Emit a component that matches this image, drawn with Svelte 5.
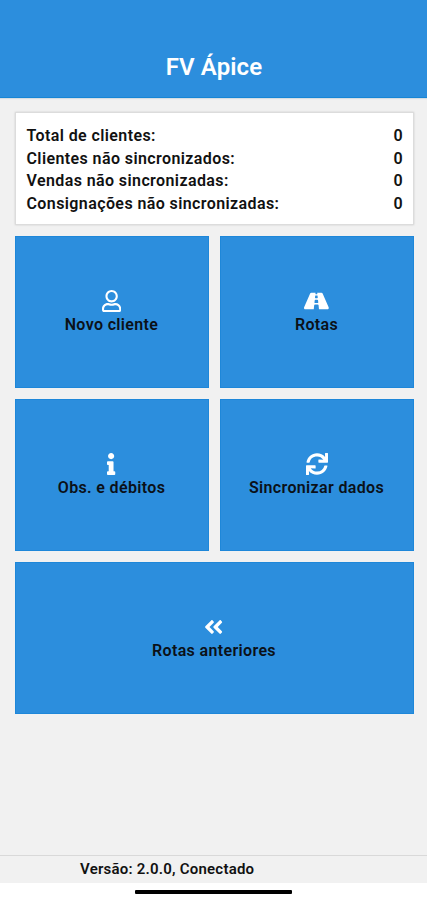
<script>
  const totals = [
    { label: 'Total de clientes:', value: 0 },
    { label: 'Clientes não sincronizados:', value: 0 },
    { label: 'Vendas não sincronizadas:', value: 0 },
    { label: 'Consignações não sincronizadas:', value: 0 },
  ];

  const actions = [
    {
      label: 'Novo cliente',
      box: '0 0 448 512',
      path: 'M313.6 304c-28.7 0-42.5 16-89.6 16-47.1 0-60.8-16-89.6-16C60.2 304 0 364.2 0 438.4V464c0 26.5 21.5 48 48 48h352c26.5 0 48-21.5 48-48v-25.6c0-74.2-60.2-134.4-134.4-134.4zM400 464H48v-25.6c0-47.6 38.8-86.4 86.4-86.4 14.6 0 38.3 16 89.6 16 51.7 0 74.9-16 89.6-16 47.6 0 86.4 38.8 86.4 86.4V464zM224 288c79.5 0 144-64.5 144-144S303.5 0 224 0 80 64.5 80 144s64.5 144 144 144zm0-240c52.9 0 96 43.1 96 96s-43.1 96-96 96-96-43.1-96-96 43.1-96 96-96z',
    },
    {
      label: 'Rotas',
      box: '0 0 576 512',
      path: 'M573.19 402.67l-139.79-320C428.43 71.29 417.6 64 405.68 64h-97.59l2.45 23.16c.5 4.72-3.21 8.84-7.96 8.84h-29.16c-4.75 0-8.46-4.12-7.96-8.84L267.91 64h-97.59c-11.93 0-22.76 7.29-27.73 18.67L2.8 402.67C-6.45 423.86 8.31 448 30.54 448h196.84l10.31-97.68c.86-8.14 7.72-14.32 15.91-14.32h68.8c8.19 0 15.05 6.18 15.91 14.32L348.62 448h196.84c22.23 0 36.99-24.14 27.73-45.33zM260.4 135.16a8 8 0 0 1 7.96-7.16h39.29c4.09 0 7.53 3.09 7.96 7.16l4.6 43.58c.75 7.09-4.81 13.26-11.93 13.26h-40.54c-7.13 0-12.68-6.17-11.93-13.26l4.59-43.58zM315.64 304h-55.29c-9.5 0-16.91-8.23-15.91-17.68l5.07-48c.86-8.14 7.72-14.32 15.91-14.32h45.15c8.19 0 15.05 6.18 15.91 14.32l5.07 48c1 9.45-6.41 17.68-15.91 17.68z',
    },
    {
      label: 'Obs. e débitos',
      box: '0 0 192 512',
      path: 'M20 424.229h20V279.771H20c-11.046 0-20-8.954-20-20V212c0-11.046 8.954-20 20-20h112c11.046 0 20 8.954 20 20v212.229h20c11.046 0 20 8.954 20 20V492c0 11.046-8.954 20-20 20H20c-11.046 0-20-8.954-20-20v-47.771c0-11.046 8.954-20 20-20zM96 0C56.235 0 24 32.235 24 72s32.235 72 72 72 72-32.235 72-72S135.764 0 96 0z',
    },
    {
      label: 'Sincronizar dados',
      box: '0 0 512 512',
      path: 'M440.65 12.57l4 82.77A247.16 247.16 0 0 0 255.83 8C134.73 8 33.91 94.92 12.29 209.82A12 12 0 0 0 24.09 224h49.05a12 12 0 0 0 11.67-9.26 175.91 175.91 0 0 1 317-56.94l-101.46-4.86a12 12 0 0 0-12.57 12v47.41a12 12 0 0 0 12 12H500a12 12 0 0 0 12-12V12a12 12 0 0 0-12-12h-47.37a12 12 0 0 0-11.98 12.57zM255.83 432a175.61 175.61 0 0 1-146-77.8l101.8 4.87a12 12 0 0 0 12.57-12v-47.4a12 12 0 0 0-12-12H12a12 12 0 0 0-12 12V500a12 12 0 0 0 12 12h47.35a12 12 0 0 0 12-12.6l-4.15-82.57A247.17 247.17 0 0 0 255.83 504c121.11 0 221.93-86.92 243.55-201.82a12 12 0 0 0-11.8-14.18h-49.05a12 12 0 0 0-11.67 9.26A175.86 175.86 0 0 1 255.83 432z',
    },
    {
      label: 'Rotas anteriores',
      wide: true,
      box: '0 0 448 512',
      path: 'M223.7 239l136-136c9.4-9.4 24.6-9.4 33.9 0l22.6 22.6c9.4 9.4 9.4 24.6 0 33.9L319.9 256l96.4 96.4c9.4 9.4 9.4 24.6 0 33.9L393.7 409c-9.4 9.4-24.6 9.4-33.9 0l-136-136c-9.5-9.4-9.5-24.6-.1-34zm-192 34l136 136c9.4 9.4 24.6 9.4 33.9 0l22.6-22.6c9.4-9.4 9.4-24.6 0-33.9L127.9 256l96.4-96.4c9.4-9.4 9.4-24.6 0-33.9L201.7 103c-9.4-9.4-24.6-9.4-33.9 0l-136 136c-9.5 9.4-9.5 24.6-.1 34z',
    },
  ];
</script>

<div class="screen">
  <header>
    <h1>FV Ápice</h1>
  </header>

  <main>
    <div class="totals">
      {#each totals as item}
        <div class="row">
          <span>{item.label}</span>
          <span>{item.value}</span>
        </div>
      {/each}
    </div>

    <div class="actions">
      {#each actions as action}
        <button class="tile" class:wide={action.wide}>
          <svg viewBox={action.box} height="22" fill="currentColor" aria-hidden="true">
            <path d={action.path} />
          </svg>
          <span>{action.label}</span>
        </button>
      {/each}
    </div>
  </main>

  <footer>Versão: 2.0.0, Conectado</footer>
  <div class="nav-bar"><div class="handle"></div></div>
</div>

<style>
  :global(body) {
    margin: 0;
  }
  .screen {
    height: 900px;
    display: flex;
    flex-direction: column;
    background: #f1f1f1;
    color: #111;
    font-family: Roboto, "Liberation Sans", sans-serif;
    font-size: 16px;
    font-weight: 600;
  }
  header {
    height: 98px;
    box-sizing: border-box;
    padding: 50px 0 0 1px;
    background: #2c8edd;
    border-bottom: 1px solid #1685d5;
    box-shadow: 0 1px 1px #d5dde3;
    text-align: center;
  }
  h1 {
    margin: 0;
    color: #fff;
    font-size: 24px;
    line-height: 34px;
    font-weight: 600;
    letter-spacing: 0.1px;
  }
  main {
    flex: 1;
    padding: 14px 13.5px 0 14.5px;
  }
  .totals {
    height: 113px;
    box-sizing: border-box;
    padding: 12px 9.5px 0 11px;
    background: #fff;
    border: 1px solid #dcdcdc;
    box-shadow: 0 0 2px rgba(0, 0, 0, 0.15);
  }
  .row {
    display: flex;
    justify-content: space-between;
    line-height: 22.6px;
    letter-spacing: 0.4px;
  }
  .actions {
    margin-top: 11px;
    display: grid;
    grid-template-columns: 1fr 1fr;
    grid-auto-rows: 152px;
    gap: 11px;
  }
  .tile {
    display: flex;
    flex-direction: column;
    align-items: center;
    justify-content: center;
    gap: 2px;
    padding: 2px 0 0;
    border: 1px solid #1e87d9;
    background: #2c8edd;
    color: #fff;
    font: inherit;
  }
  .tile span {
    color: #0b1118;
    line-height: 22px;
    letter-spacing: 0.35px;
  }
  .wide {
    grid-column: span 2;
  }
  footer {
    height: 28px;
    box-sizing: border-box;
    padding-left: 80px;
    border-top: 1px solid #d9d9d9;
    font-size: 15px;
    line-height: 27px;
    letter-spacing: 0.22px;
  }
  .nav-bar {
    height: 17px;
    display: flex;
    justify-content: center;
    align-items: center;
    background: #fff;
  }
  .handle {
    width: 157px;
    height: 4px;
    border-radius: 1px;
    background: #000;
  }
</style>
